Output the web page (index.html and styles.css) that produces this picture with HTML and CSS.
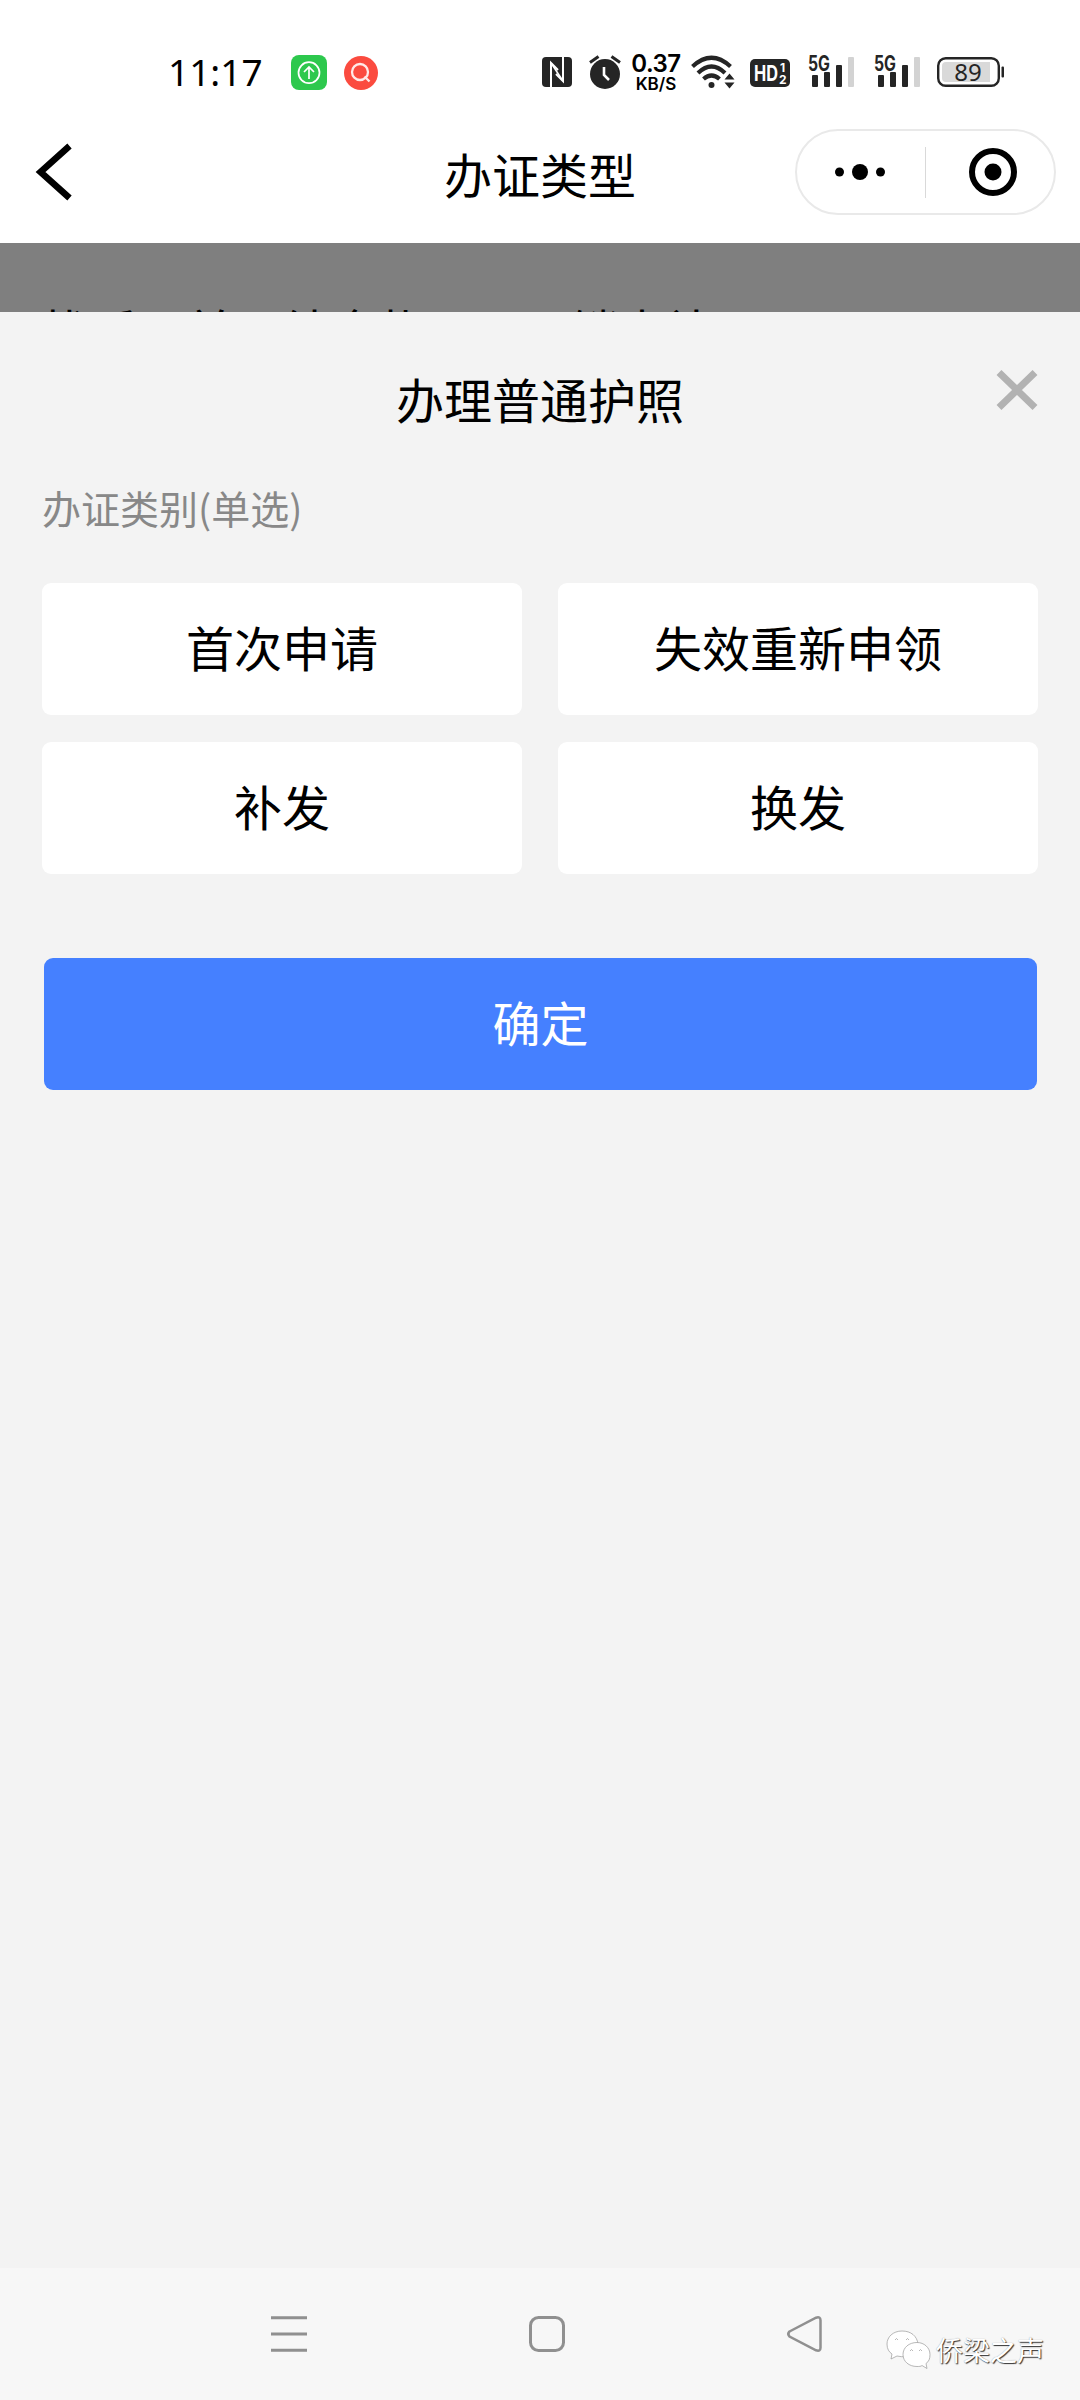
FILE: index.html
```html
<!DOCTYPE html>
<html lang="zh-CN">
<head>
    <meta charset="UTF-8">
    <title>办证类型</title>
    <link rel="stylesheet" href="styles.css">
</head>
<body>
    <div class="status-bar">
        <span class="time">11:17</span>
        <svg class="app-up" width="36" height="36" viewBox="0 0 36 36">
            <rect width="36" height="35" rx="8" fill="#2dc84d"/>
            <g fill="none" stroke="#fff" stroke-width="1.7">
                <circle cx="18" cy="17.7" r="10.5"/>
                <path d="M18 24V12.5M13 17l5-5 5 5"/>
            </g>
        </svg>
        <svg class="app-search" width="34" height="34" viewBox="0 0 34 34">
            <circle cx="17" cy="17" r="17" fill="#fb4b3f"/>
            <g fill="none" stroke="#ffe9e7" stroke-width="2.3">
                <circle cx="16" cy="16" r="8"/>
                <path d="M20.5 20.5l5 5"/>
            </g>
        </svg>
        <svg class="nfc" width="30" height="30" viewBox="0 0 30 30">
            <rect width="30" height="30" rx="4" fill="#252525"/>
            <path d="M9 30V6l7 7M21 0v24l-7-7" fill="none" stroke="#fff" stroke-width="2"/>
            <path d="M9 6l12 18" fill="none" stroke="#fff" stroke-width="1.5"/>
        </svg>
        <svg class="alarm" width="32" height="34" viewBox="0 0 32 34">
            <circle cx="16" cy="19" r="15" fill="#252525"/>
            <path d="M1 7.5l8.500-6M31 7.500l-8.500-6" stroke="#252525" stroke-width="3"/>
            <path d="M15 12v8l5 5" fill="none" stroke="#fff" stroke-width="2.6"/>
        </svg>
        <div class="speed">
            <span class="speed-num">0.37</span>
            <span class="speed-unit">KB/S</span>
        </div>
        <svg class="wifi" width="44" height="34" viewBox="0 0 44 34">
            <g fill="none" stroke="#252525" stroke-width="4.2">
                <path d="M1.500 11.500Q20.500-6 39.500 11.500"/>
                <path d="M7 18Q20.500 5 34 18"/>
                <path d="M12.500 24Q20.500 17 28.500 24"/>
            </g>
            <circle cx="20.5" cy="30" r="3" fill="#252525"/>
            <path d="M33.500 24.500l5-6 5 6zM33.500 27.500l5 6 5-6z" fill="#252525"/>
        </svg>
        <svg class="hd" width="40" height="28" viewBox="0 0 40 28">
            <rect width="40" height="28" rx="5" fill="#252525"/>
            <text x="4" y="22" font-size="22" textLength="24" lengthAdjust="spacingAndGlyphs">HD</text>
            <text x="30" y="13" font-size="12">1</text>
            <text x="29" y="25" font-size="12">2</text>
        </svg>
        <svg class="signal" width="46" height="33" viewBox="0 0 46 33">
            <text x="0" y="16.5" font-size="21" textLength="22" lengthAdjust="spacingAndGlyphs">5G</text>
            <rect x="4" y="21" width="6" height="12" rx="1"/>
            <rect x="16" y="18" width="6" height="15" rx="1"/>
            <rect x="28" y="11" width="6" height="22" rx="1"/>
            <rect class="off" x="40" y="3" width="6" height="30" rx="1"/>
        </svg>
        <svg class="signal second" width="46" height="33" viewBox="0 0 46 33">
            <text x="0" y="16.5" font-size="21" textLength="22" lengthAdjust="spacingAndGlyphs">5G</text>
            <rect x="4" y="21" width="6" height="12" rx="1"/>
            <rect x="16" y="18" width="6" height="15" rx="1"/>
            <rect x="28" y="11" width="6" height="22" rx="1"/>
            <rect class="off" x="40" y="3" width="6" height="30" rx="1"/>
        </svg>
        <svg class="battery" width="68" height="30" viewBox="0 0 68 30">
            <rect x="1.200" y="1.200" width="60.600" height="27.600" rx="7.500" fill="none" stroke="#252525" stroke-width="2.400"/>
            <path d="M9 5h44v20H9q-4 0-4-4V9q0-4 4-4z" fill="#d9d9d9"/>
            <rect x="64.500" y="9.500" width="2.500" height="11" rx="1" fill="#252525"/>
            <text x="31" y="23.5" font-size="24" text-anchor="middle">89</text>
        </svg>
    </div>

    <div class="nav-bar">
        <svg class="back" width="38" height="60" viewBox="0 0 38 60">
            <path d="M33.500 4L4.500 30l29 26" fill="none" stroke="#000" stroke-width="6.500"/>
        </svg>
        <h1 class="nav-title">办证类型</h1>
        <div class="capsule">
            <svg class="more" width="50" height="16" viewBox="0 0 50 16">
                <circle cx="4.500" cy="8" r="4.500"/>
                <circle cx="25" cy="8" r="8"/>
                <circle cx="45.500" cy="8" r="4.500"/>
            </svg>
            <i class="divider"></i>
            <svg class="exit" width="48" height="48" viewBox="0 0 48 48">
                <circle cx="24" cy="24" r="21" fill="none" stroke="#000" stroke-width="6"/>
                <circle cx="24" cy="24" r="8.500"/>
            </svg>
        </div>
    </div>

    <!-- 遮罩下的页面 -->
    <div class="mask">
        <p class="under-text">找乏一并一结金扎一一一销本补</p>
    </div>

    <!-- 底部弹层 -->
    <div class="sheet">
        <div class="sheet-head">
            <h2 class="sheet-title">办理普通护照</h2>
            <svg class="close" width="42" height="40" viewBox="0 0 42 40">
                <path d="M3 2.500l36 35M39 2.500l-36 35" stroke="#b2b2b2" stroke-width="7"/>
            </svg>
        </div>
        <p class="label">办证类别(单选)</p>
        <div class="options">
            <div class="option">首次申请</div>
            <div class="option">失效重新申领</div>
            <div class="option">补发</div>
            <div class="option">换发</div>
        </div>
        <div class="confirm">确定</div>
    </div>

    <div class="system-nav">
        <svg width="36" height="36" viewBox="0 0 36 36">
            <path d="M0 1.700h36M0 18h36M0 34.300h36"/>
        </svg>
        <svg width="36" height="36" viewBox="0 0 36 36">
            <rect x="1.500" y="1.500" width="33" height="33" rx="8"/>
        </svg>
        <svg width="36" height="36" viewBox="0 0 36 36">
            <path d="M2.500 15.500L29 1.700q4.500-1.500 4.500 2.500v27.600q0 4-4.500 2.500L2.500 20.500q-2.500-2.500 0-5z" stroke-width="2.500"/>
        </svg>
        <div class="watermark">
            <svg width="46" height="40" viewBox="0 0 46 40">
                <g fill="#fff" stroke="#999" stroke-width="0.7">
                    <path d="M16 1C7 1 1 7 1 14c0 5 2 8 5 10l-1 5 6-3c13 3 21-3 21-12C31 6 25 1 16 1z"/>
                    <path d="M31 12.500c-8 0-14 5-14 12s6 12 14 12c2 0 4 0 5-1l5 3-1-5c3-2 4-5 4-9 0-7-6-12-13-12z"/>
                    <path d="M9 10q1.500-3 3 0M20 10q1.500-3 3 0M24 21q1.500-3 3 0M33 21q1.500-3 3 0"/>
                </g>
            </svg>
            <span>侨梁之声</span>
        </div>
    </div>
</body>
</html>
```
FILE: styles.css
```css
* {
    box-sizing: border-box;
}
body {
    margin: 0;
    width: 1080px;
    height: 2400px;
    display: flex;
    flex-direction: column;
    background-color: #fff;
    color: #000;
    font-family: "Noto Sans CJK SC", sans-serif;
    overflow: hidden;
}
h1, h2, p {
    margin: 0;
    font-weight: 400;
}
svg {
    display: block;
    flex: none;
    overflow: visible;
}

/* 状态栏 */
.status-bar {
    display: flex;
    align-items: flex-start;
    height: 112px;
    padding: 55px 0 0 168px;
    font-family: Inter, sans-serif;
}
.time {
    width: 123px;
    margin-top: -4px;
    font-family: "Noto Sans", sans-serif;
    font-size: 37px;
    line-height: 42px;
    font-weight: 400;
    white-space: nowrap;
}
.app-search {
    margin: 1px 0 0 17px;
}
.nfc {
    margin: 2px 0 0 164px;
}
.alarm {
    margin-left: 17px;
}
.speed {
    display: flex;
    flex-direction: column;
    align-items: center;
    width: 50px;
    margin-left: 10px;
    font-weight: 600;
    white-space: nowrap;
}
.speed-num {
    font-size: 24px;
    line-height: 18px;
    letter-spacing: -0.5px;
}
.speed-unit {
    margin-top: 4px;
    font-size: 17px;
    line-height: 15px;
}
.wifi {
    margin-left: 10px;
}
.hd {
    margin: 4px 0 0 15px;
}
.hd text {
    fill: #fff;
    font-weight: 700;
}
.signal {
    margin: -1px 0 0 18px;
    fill: #252525;
    font-weight: 700;
}
.signal.second {
    margin-left: 20px;
}
.signal .off {
    fill: #d3d3d3;
}
.battery {
    margin: 2px 0 0 17px;
}
.battery text {
    fill: #252525;
    font-family: "Noto Sans", sans-serif;
}

/* 标题栏 */
.nav-bar {
    display: grid;
    grid-template-columns: 285px 1fr 285px;
    align-items: center;
    height: 131px;
    padding-bottom: 11px;
}
.back {
    margin-left: 36px;
}
.nav-title {
    padding-top: 2px;
    font-size: 48px;
    line-height: 60px;
    text-align: center;
}
.capsule {
    display: flex;
    align-items: center;
    width: 261px;
    height: 86px;
    padding-left: 38px;
    border: 2px solid #e9e9e9;
    border-radius: 43px;
}
.divider {
    width: 1px;
    height: 51px;
    margin: 0 43px 0 40px;
    background-color: #d9d9d9;
}

.mask {
    height: 69px;
    padding-top: 56px;
    background-color: #7f7f7f;
    overflow: hidden;
}
.under-text {
    padding-left: 42px;
    font-size: 48px;
    line-height: 60px;
    white-space: nowrap;
}

/* 弹层 */
.sheet {
    flex: 1;
    padding: 0 42px;
    background-color: #f3f3f3;
}
.sheet-head {
    display: grid;
    grid-template-columns: 42px 1fr 42px;
    align-items: start;
    padding-top: 56px;
}
.sheet-title {
    grid-column: 2;
    font-size: 48px;
    line-height: 60px;
    text-align: center;
}
.close {
    margin-top: 2px;
}
.label {
    margin-top: 54px;
    color: #888;
    font-size: 39px;
    line-height: 50px;
}
.options {
    display: grid;
    grid-template-columns: 1fr 1fr;
    gap: 27px 36px;
    margin-top: 51px;
}
.option {
    height: 132px;
    border-radius: 9px;
    background-color: #fff;
    font-size: 48px;
    line-height: 127px;
    text-align: center;
}
.confirm {
    height: 132px;
    margin: 84px 1px 0 2px;
    border-radius: 9px;
    background-color: #4580ff;
    color: #fff;
    font-size: 48px;
    line-height: 127px;
    text-align: center;
}

/* 系统导航 */
.system-nav {
    display: flex;
    align-items: flex-start;
    gap: 222px;
    height: 132px;
    padding: 48px 0 0 271px;
    background-color: #f7f7f7;
}
.system-nav > svg {
    fill: none;
    stroke: #909090;
    stroke-width: 3;
}
.watermark {
    display: flex;
    align-items: center;
    gap: 4px;
    margin: 14px 0 0 -159px;
    color: #fff;
    font-size: 27px;
    line-height: 40px;
    text-shadow: 1px 1px 1px #333, 0 0 1px #999;
    white-space: nowrap;
}
```
